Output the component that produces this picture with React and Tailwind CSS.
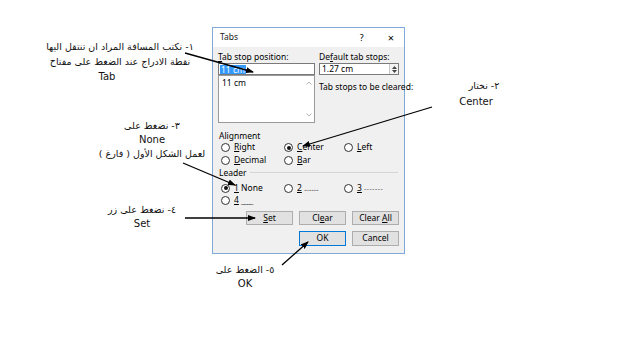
import React from "react";

const U = ({ children }) => <span className="underline underline-offset-1">{children}</span>;

function Radio({ checked, children }) {
  return (
    <div className="flex items-center gap-[4px] h-full">
      <div className="w-[9px] h-[9px] rounded-full border border-[#333] bg-white flex items-center justify-center shrink-0">
        {checked && <div className="w-[4px] h-[4px] rounded-full bg-[#111]" />}
      </div>
      <span className="leading-none whitespace-nowrap">{children}</span>
    </div>
  );
}

function Btn({ children, primary }) {
  return (
    <div
      className={
        "w-[47px] h-full flex items-center justify-center bg-[#e1e1e1] border " +
        (primary ? "border-[#0078d7]" : "border-[#adadad]")
      }
    >
      <span className="whitespace-pre">{children}</span>
    </div>
  );
}

function Arrows() {
  const lines = [
    [185, 53, 253, 72],
    [432, 107, 303, 146],
    [183, 163, 235, 185],
    [185, 218, 255, 218],
    [282, 265, 308, 242],
  ];
  return (
    <svg className="absolute left-0 top-0 pointer-events-none" width="640" height="360" viewBox="0 0 640 360">
      <defs>
        <marker id="ah" markerWidth="8" markerHeight="6" refX="7" refY="3" orient="auto" markerUnits="userSpaceOnUse">
          <polygon points="0,0 8,3 0,6" fill="#000" />
        </marker>
      </defs>
      {lines.map(([x1, y1, x2, y2], i) => (
        <line key={i} x1={x1} y1={y1} x2={x2} y2={y2} stroke="#000" strokeWidth="1.3" markerEnd="url(#ah)" />
      ))}
    </svg>
  );
}

const ar = { fontFamily: '"DejaVu Sans", sans-serif' };

export default function App() {
  return (
    <div className="relative w-[640px] h-[360px] bg-white overflow-hidden pt-[27px] pl-[212px]">
      {/* Dialog */}
      <div
        className="w-[193px] h-[227px] border border-[#7fa9da] flex flex-col bg-[#f0f0f0] text-[8.5px] text-black"
        style={{ fontFamily: '"Noto Sans", "Open Sans", sans-serif' }}
      >
        <div className="h-[19px] bg-white flex items-center pl-[7px] shrink-0">
          <span className="text-[#222]">Tabs</span>
          <span className="ml-auto mr-[24px] text-[9px]">?</span>
          <span className="mr-[10px] text-[11px] leading-none">×</span>
        </div>
        <div className="flex-1 flex flex-col pt-[4px]">
          {/* top section */}
          <div className="flex">
            <div className="ml-[5px] w-[97px] flex flex-col">
              <div className="h-[11px] leading-[11px]"><U>T</U>ab stop position:</div>
              <div className="mt-[1px] h-[12px] border border-[#7a7a7a] bg-white flex items-center pl-[1px]">
                <span className="bg-[#3399ff] text-white px-[1px] leading-[9px]">11 cm</span>
              </div>
              <div className="h-[48px] border border-[#9a9a9a] bg-white flex">
                <div className="flex-1 pl-[3px] pt-[1px] leading-[11px]">11 cm</div>
                <div className="w-[10px] flex flex-col items-center justify-between py-[5px]">
                  <svg width="6" height="4" viewBox="0 0 6 4"><path d="M0.5 3.5 L3 1 L5.5 3.5" fill="none" stroke="#b5b5b5" strokeWidth="1" /></svg>
                  <svg width="6" height="4" viewBox="0 0 6 4"><path d="M0.5 0.5 L3 3 L5.5 0.5" fill="none" stroke="#b5b5b5" strokeWidth="1" /></svg>
                </div>
              </div>
            </div>
            <div className="ml-[4px] w-[80px] flex flex-col">
              <div className="h-[11px] leading-[11px]">De<U>f</U>ault tab stops:</div>
              <div className="mt-[1px] h-[12px] border border-[#7a7a7a] bg-white flex items-center">
                <span className="pl-[2px] flex-1">1.27 cm</span>
                <div className="w-[9px] h-full border-l border-[#c8c8c8] flex flex-col items-center justify-center gap-[1px] bg-[#f4f4f4]">
                  <svg width="5" height="3" viewBox="0 0 5 3"><polygon points="0,3 2.5,0 5,3" fill="#444" /></svg>
                  <svg width="5" height="3" viewBox="0 0 5 3"><polygon points="0,0 2.5,3 5,0" fill="#444" /></svg>
                </div>
              </div>
              <div className="mt-[6px] h-[11px] leading-[11px] whitespace-nowrap">Tab stops to be cleared:</div>
            </div>
          </div>

          {/* Alignment */}
          <div className="mt-[7px] h-[11px] leading-[11px] pl-[6px]">Alignment</div>
          <div className="grid grid-cols-[63px_60px_1fr] grid-rows-[13px_13px] pl-[8px]">
            <Radio><U>R</U>ight</Radio>
            <Radio checked><U>C</U>enter</Radio>
            <Radio><U>L</U>eft</Radio>
            <Radio><U>D</U>ecimal</Radio>
            <Radio><U>B</U>ar</Radio>
          </div>

          {/* Leader */}
          <div className="h-[11px] flex items-center pl-[6px] pr-[6px] gap-[3px]">
            <span className="leading-[11px]">Leader</span>
            <div className="flex-1 h-px bg-[#d4d4d4]" />
          </div>
          <div className="mt-[4px] grid grid-cols-[63px_60px_1fr] grid-rows-[12px_12px] pl-[8px]">
            <Radio checked><U>1</U> None</Radio>
            <Radio><U>2</U> <span className="tracking-[-0.5px] text-[#555]">........</span></Radio>
            <Radio><U>3</U> <span className="text-[#555] tracking-[0.5px] text-[7px]">-------</span></Radio>
            <Radio><U>4</U> <span className="text-[#555] tracking-[-1px]">____</span></Radio>
          </div>

          {/* buttons */}
          <div className="mt-[5px] h-[14px] flex justify-end gap-[6px] pr-[5px]">
            <Btn><U>S</U>et</Btn>
            <Btn>Cl<U>e</U>ar</Btn>
            <Btn>{"Clear "}<U>A</U>ll</Btn>
          </div>
          <div className="mt-[6px] h-[15px] flex justify-end gap-[6px] pr-[5px]">
            <Btn primary>OK</Btn>
            <Btn>Cancel</Btn>
          </div>
        </div>
      </div>

      {/* Annotations */}
      <div className="absolute left-[40px] top-[39px] w-[160px] text-center text-[9.5px] leading-[15px] text-[#111]" style={ar}>
        <div dir="rtl">١- نكتب المسافة المراد ان تنتقل اليها</div>
        <div dir="rtl">نقطة الادراج عند الضغط على مفتاح</div>
        <div className="pr-[26px] text-[10px]">Tab</div>
      </div>
      <div className="absolute left-[436px] top-[78px] w-[80px] text-center text-[10px] leading-[16px] text-[#111]" style={ar}>
        <div dir="rtl" className="pl-[16px] text-[9.5px]">٢- نختار</div>
        <div>Center</div>
      </div>
      <div className="absolute left-[87px] top-[119px] w-[130px] text-center text-[10px] leading-[14px] text-[#111]" style={ar}>
        <div dir="rtl" className="text-[9.5px]">٣- نضغط على</div>
        <div>None</div>
        <div dir="rtl" className="text-[9.5px]">لعمل الشكل الأول ( فارغ )</div>
      </div>
      <div className="absolute left-[92px] top-[203px] w-[100px] text-center text-[10px] leading-[14px] text-[#111]" style={ar}>
        <div dir="rtl" className="text-[9.5px]">٤- نضغط على زر</div>
        <div>Set</div>
      </div>
      <div className="absolute left-[205px] top-[263px] w-[80px] text-center text-[10px] leading-[14px] text-[#111]" style={ar}>
        <div dir="rtl" className="text-[9.5px]">٥- الضغط على</div>
        <div>OK</div>
      </div>

      <Arrows />
    </div>
  );
}
